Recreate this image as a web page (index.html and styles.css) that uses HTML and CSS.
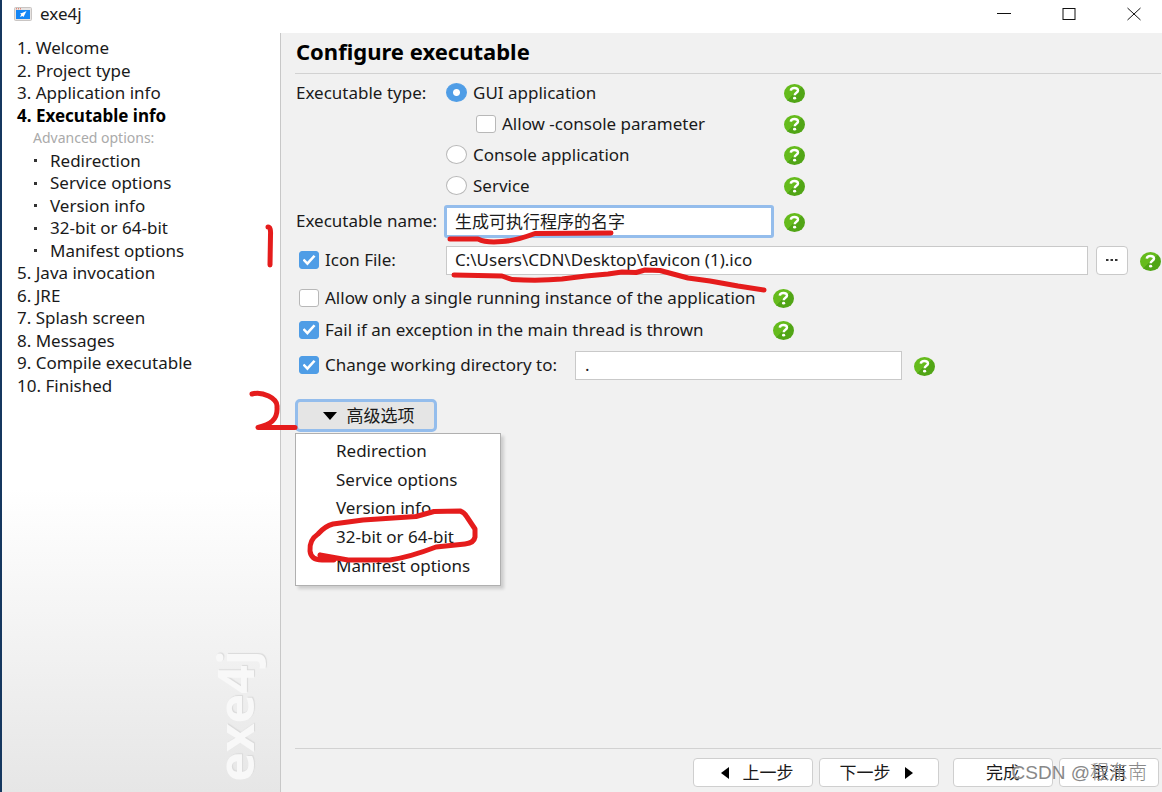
FILE: index.html
```html
<!DOCTYPE html>
<html lang="zh-CN">
<head>
<meta charset="utf-8">
<title>exe4j</title>
<link rel="stylesheet" href="styles.css">
</head>
<body>
<svg class="defs" aria-hidden="true">
  <defs>
    <linearGradient id="green" x1="0" y1="0" x2="1" y2="1">
      <stop offset="0" stop-color="#65bb1c"/><stop offset=".5" stop-color="#65bb1c"/>
      <stop offset=".5" stop-color="#51a516"/><stop offset="1" stop-color="#51a516"/>
    </linearGradient>
    <symbol id="help" viewBox="0 0 21 19" preserveAspectRatio="none">
      <ellipse cx="10.5" cy="9.5" rx="10.5" ry="9.5" fill="url(#green)"/>
      <path d="M6.8 6.6C7.2 3.300 14 3.200 14 6.500C14 8.900 10.700 8.700 10.700 11.300" fill="none" stroke="#fff" stroke-width="2.500"/>
      <ellipse cx="10.600" cy="14.200" rx="1.600" ry="1.400" fill="#fff"/>
    </symbol>
  </defs>
</svg>
<div class="window">
  <header class="titlebar">
    <svg class="app-icon" viewBox="0 0 18 14" aria-hidden="true">
      <rect x=".5" y=".5" width="17" height="13" rx="1" fill="#e8e4e2" stroke="#c9c5c3"/>
      <path d="M2 1.800h1M4 1.800h1M6 1.800h1" stroke="#e0604c"/>
      <rect x="2" y="3" width="14" height="9" fill="#1486f5"/>
      <path d="M12.500 4L8 6L6 6.500L7.200 7.600L6 10L8.500 9L9.500 10L10.500 8Z" fill="#fff"/>
    </svg>
    <h1 class="app-name">exe4j</h1>
    <div class="window-buttons">
      <button type="button" aria-label="Minimize"><svg viewBox="0 0 14 14"><path d="M0 6.500h14" /></svg></button>
      <button type="button" aria-label="Maximize"><svg viewBox="0 0 14 14"><rect x="1" y="1.500" width="12" height="11"/></svg></button>
      <button type="button" aria-label="Close"><svg viewBox="0 0 14 14"><path d="M.5 1L13.500 13M13.500 1L.5 13"/></svg></button>
    </div>
  </header>
  <div class="body">
    <nav class="sidebar">
      <ul class="steps">
        <li>1. Welcome</li>
        <li>2. Project type</li>
        <li>3. Application info</li>
        <li class="current">4. Executable info</li>
        <li class="caption">Advanced options:</li>
        <li class="sub">Redirection</li>
        <li class="sub">Service options</li>
        <li class="sub">Version info</li>
        <li class="sub">32-bit or 64-bit</li>
        <li class="sub">Manifest options</li>
        <li>5. Java invocation</li>
        <li>6. JRE</li>
        <li>7. Splash screen</li>
        <li>8. Messages</li>
        <li>9. Compile executable</li>
        <li>10. Finished</li>
      </ul>
      <div class="brand">exe4j</div>
    </nav>
    <main class="main">
      <h2 class="heading">Configure executable</h2>
      <form class="form">
        <div class="row">
          <span class="label">Executable type:</span>
          <div class="cell"><label class="option"><input type="radio" name="type" checked>GUI application</label></div>
          <button type="button" class="help" aria-label="Help"><svg><use href="#help"/></svg></button>
        </div>
        <div class="row">
          <span class="label"></span>
          <div class="cell nested"><label class="option"><input type="checkbox">Allow -console parameter</label></div>
          <button type="button" class="help" aria-label="Help"><svg><use href="#help"/></svg></button>
        </div>
        <div class="row">
          <span class="label"></span>
          <div class="cell"><label class="option"><input type="radio" name="type">Console application</label></div>
          <button type="button" class="help" aria-label="Help"><svg><use href="#help"/></svg></button>
        </div>
        <div class="row">
          <span class="label"></span>
          <div class="cell"><label class="option"><input type="radio" name="type">Service</label></div>
          <button type="button" class="help" aria-label="Help"><svg><use href="#help"/></svg></button>
        </div>
        <div class="row tall">
          <label class="label" for="exe-name">Executable name:</label>
          <div class="cell"><input type="text" class="field focused" id="exe-name" value="生成可执行程序的名字"></div>
          <button type="button" class="help" aria-label="Help"><svg><use href="#help"/></svg></button>
        </div>
        <div class="row tall icon-row">
          <label class="option label"><input type="checkbox" checked>Icon File:</label>
          <input type="text" class="field grow" aria-label="Icon File" value="C:\Users\CDN\Desktop\favicon (1).ico">
          <button type="button" class="browse" aria-label="Browse"><svg viewBox="0 0 12 2"><path d="M0 1h2.500M4.500 1h2.500M9 1h2.500"/></svg></button>
          <button type="button" class="help" aria-label="Help"><svg><use href="#help"/></svg></button>
        </div>
        <div class="row check">
          <label class="option wide"><input type="checkbox">Allow only a single running instance of the application</label>
          <button type="button" class="help" aria-label="Help"><svg><use href="#help"/></svg></button>
        </div>
        <div class="row">
          <label class="option wide"><input type="checkbox" checked>Fail if an exception in the main thread is thrown</label>
          <button type="button" class="help" aria-label="Help"><svg><use href="#help"/></svg></button>
        </div>
        <div class="row tall">
          <label class="option directory"><input type="checkbox" checked>Change working directory to:</label>
          <input type="text" class="field dir-field" aria-label="Working directory" value=".">
          <button type="button" class="help" aria-label="Help"><svg><use href="#help"/></svg></button>
        </div>
        <div class="advanced">
          <button type="button" class="advanced-button"><svg viewBox="0 0 14 8"><path d="M0 0H14L7 8Z"/></svg>高级选项</button>
          <ul class="menu">
            <li>Redirection</li>
            <li>Service options</li>
            <li>Version info</li>
            <li>32-bit or 64-bit</li>
            <li>Manifest options</li>
          </ul>
        </div>
      </form>
      <footer class="footer">
        <button type="button" class="nav-button"><svg viewBox="0 0 8 12"><path d="M8 0V12L0 6Z"/></svg>上一步</button>
        <button type="button" class="nav-button">下一步<svg viewBox="0 0 8 12"><path d="M0 0V12L8 6Z"/></svg></button>
        <button type="button" class="nav-button finish">完成</button>
        <button type="button" class="nav-button cancel">取消</button>
      </footer>
    </main>
  </div>
  <svg class="marks" viewBox="0 0 1162 792" aria-hidden="true">
    <path d="M268 227Q271 227 270.500 235L270 265"/>
    <path d="M252 394C262 391 278 398 277 407C278 420 270 425 258 427.500H295"/>
    <path d="M450 239L478 239Q486 243 502 241.500Q515 241 535 233.500L611 233"/>
    <path d="M454 275L502 276L512 279.500Q540 281 562 279L586 276L608 274L622 272L636 272.500L645 270L660 270.500L688 278L710 281L738 286L764 290"/>
    <path d="M320 555L334 560L322 560Q311 560 310 551Q309 540 318 534Q325 526 333 524L363 520L416 516.500L434 511.500L460 511Q464 512 467 517L475 529L475 537Q474 543 465 544L436 547Q410 557 390 560L348 560L320 555"/>
  </svg>
  <div class="watermark">CSDN @程东南</div>
</div>
</body>
</html>
```
FILE: styles.css
```css
* { box-sizing: border-box; }

body {
  margin: 0;
  font: 17px/22px "Noto Sans", "Noto Sans CJK SC", sans-serif;
  color: #1a1a1a;
}

button, input { font: inherit; color: inherit; margin: 0; }
button { padding: 0; }
ul { list-style: none; margin: 0; padding: 0; }

.defs { position: absolute; width: 0; height: 0; }

.window {
  position: relative;
  display: flex;
  flex-direction: column;
  min-height: 100vh;
  border-left: 2px solid #15375f;
  background: #fff;
  overflow: hidden;
}

.titlebar {
  display: flex;
  align-items: center;
  height: 33px;
  padding: 0 21px 5px 12px;
}
.app-icon { width: 18px; height: 14px; }
.app-name { margin: 0 0 0 8px; font-size: 17px; font-weight: 400; }
.window-buttons { display: flex; gap: 51px; margin-left: auto; }
.window-buttons button {
  width: 14px;
  height: 14px;
  border: 0;
  background: none;
}
.window-buttons svg { display: block; width: 14px; height: 14px; fill: none; stroke: #111; }

.body { display: flex; flex: 1; }

.sidebar {
  display: flex;
  flex-direction: column;
  flex: none;
  width: 279px;
  padding: 4px 17px 10px 15px;
  border-right: 1px solid #c8c8c8;
  background: linear-gradient(#fff 60%, #e6e6e6);
}
.steps { display: grid; grid-auto-rows: 1fr; height: 360px; }
.current { font-weight: 700; color: #000; }
.caption { padding-left: 16px; font-size: 14px; color: #aaa; }
.sub { display: flex; align-items: center; padding-left: 17px; }
.sub::before { content: ""; width: 3px; height: 3px; margin-right: 13px; background: #333; }
.brand {
  align-self: flex-end;
  margin-top: auto;
  writing-mode: vertical-rl;
  transform: rotate(180deg);
  font-family: "Open Sans", sans-serif;
  font-size: 50px;
  line-height: 56px;
  font-weight: 700;
  color: #f8f8f8;
  text-shadow: 1px 1px 1px #dadada;
}

.main {
  display: flex;
  flex-direction: column;
  flex: 1;
  min-width: 0;
  padding: 0 1px 5px 14px;
  background: #f1f1f1;
}
.heading {
  margin: 0;
  padding: 3px 0 7px 1px;
  border-bottom: 1px solid #d2d2d2;
  font-size: 22px;
  line-height: 30px;
  color: #000;
}
.form { flex: 1; padding-top: 3px; }

.row { display: flex; align-items: center; min-height: 31px; }
.row.check { min-height: 33px; }
.row.tall { min-height: 40px; }
.row.icon-row { min-height: 38px; margin-bottom: 2px; }
.label { flex: none; width: 151px; padding-left: 1px; }
.cell { display: flex; flex: none; width: 328px; }
.cell.nested { padding-left: 30px; }
.option { display: flex; align-items: center; gap: 6px; padding-left: 4px; }
.cell .option { padding-left: 0; }
.wide { width: 468px; white-space: nowrap; }
.directory { width: 280px; white-space: nowrap; }

input[type="checkbox"], input[type="radio"] {
  appearance: none;
  flex: none;
  width: 20px;
  height: 18px;
  border: 1px solid #b8b8b8;
  border-radius: 3px;
  background: #fff;
}
input[type="radio"] { width: 21px; height: 19px; border-radius: 50%; }
input[type="radio"]:checked {
  border-color: #4f9de6;
  background: radial-gradient(circle, #fff 3px, #4f9de6 4px);
}
input[type="checkbox"]:checked {
  display: grid;
  place-items: center;
  border-color: #4f9de6;
  background: #4f9de6;
}
input[type="checkbox"]:checked::before {
  content: "";
  width: 13px;
  height: 11px;
  background: #fff;
  clip-path: polygon(0 52%, 15% 38%, 37% 65%, 85% 4%, 100% 18%, 38% 100%);
}

.field {
  min-width: 0;
  height: 29px;
  padding: 0 8px 2px;
  border: 1px solid #c9c9c9;
  background: #fff;
  outline: 0;
}
.focused {
  flex: none;
  width: 330px;
  height: 33px;
  margin-left: -2px;
  border: 3px solid #94bdec;
  border-radius: 3px;
}
.grow { flex: 1; }
.dir-field { width: 327px; padding-left: 9px; }

.help {
  flex: none;
  width: 21px;
  height: 19px;
  margin: 2px 0 0 10px;
  border: 0;
  background: none;
}
.help svg { display: block; width: 21px; height: 19px; }
.dir-field + .help, .browse + .help { margin-left: 12px; }
.browse {
  display: grid;
  place-items: center;
  width: 32px;
  height: 29px;
  margin-left: 8px;
  border: 1px solid #c9c9c9;
  border-radius: 4px;
  background: #fff;
}
.browse svg { width: 12px; height: 2px; stroke: #333; stroke-width: 2; }

.advanced { position: relative; width: 206px; margin-top: 14px; }
.advanced-button {
  display: flex;
  align-items: center;
  justify-content: center;
  gap: 10px;
  width: 142px;
  height: 33px;
  padding-left: 5px;
  border: 3px solid #94bdec;
  border-radius: 5px;
  background: #e5e5e5;
}
.advanced-button svg { width: 14px; height: 8px; }
.menu {
  position: absolute;
  top: calc(100% + 1px);
  left: 0;
  display: grid;
  grid-auto-rows: 1fr;
  width: 100%;
  height: 153px;
  padding: 3px 0 5px;
  border: 1px solid #b0b0b0;
  background: #fff;
  box-shadow: 3px 3px 3px #00000026;
}
.menu li { display: flex; align-items: center; padding-left: 40px; }

.footer {
  display: flex;
  justify-content: flex-end;
  gap: 6px;
  padding: 9px 2px 0 0;
  border-top: 1px solid #d2d2d2;
}
.nav-button {
  display: flex;
  align-items: center;
  justify-content: center;
  gap: 14px;
  width: 120px;
  height: 29px;
  border: 1px solid #cfcfcf;
  border-radius: 4px;
  background: #fff;
}
.nav-button:first-child { padding-left: 8px; }
.nav-button:nth-child(2) { padding-right: 6px; }
.nav-button svg { width: 8px; height: 12px; }
.finish, .cancel { width: 100px; }
.finish { margin-left: 8px; }

.marks {
  position: absolute;
  top: 0;
  left: -2px;
  width: 1162px;
  height: 792px;
  fill: none;
  stroke: #e51c1c;
  stroke-width: 5;
  stroke-linecap: round;
  stroke-linejoin: round;
  pointer-events: none;
}
.watermark {
  position: absolute;
  right: 15px;
  bottom: 7px;
  font: 300 19px/24px "Liberation Sans", "Noto Sans CJK SC", sans-serif;
  color: #888;
  text-shadow: 0 0 1px #fff;
  pointer-events: none;
}
```
